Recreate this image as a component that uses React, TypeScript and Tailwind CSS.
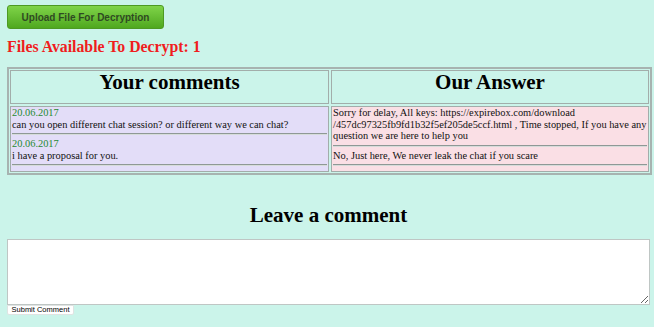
const serif = "font-['Liberation_Serif','Times_New_Roman',serif]";

const comments = [
  { date: "20.06.2017", text: "can you open different chat session? or different way we can chat?" },
  { date: "20.06.2017", text: "i have a proposal for you." },
];

const answers = [
  [
    "Sorry for delay, All keys: https://expirebox.com/download",
    "/457dc97325fb9fd1b32f5ef205de5ccf.html , Time stopped, If you have any",
    "question we are here to help you",
  ],
  ["No, Just here, We never leak the chat if you scare"],
];

function Rule() {
  return <div className="mb-[3px] mt-[3px] h-[2px] border-t border-b border-t-[#8f9896] border-b-[#d6dcda]" />;
}

export default function App() {
  return (
    <div className="h-[330px] w-[658px] bg-white">
      <div className={`h-[327px] w-[654px] bg-[#cbf4ea] pl-[7px] pr-[4px] ${serif}`}>
        {/* Upload */}
        <div className="pt-[5px]">
          <button className="flex h-[24px] w-[157px] items-center justify-center rounded-[3px] border border-[#4d9a22] bg-gradient-to-b from-[#7fd448] to-[#4fa81e] font-['Liberation_Sans',Arial,sans-serif] text-[10px] font-bold text-[#2f4a22]">
            Upload File For Decryption
          </button>
        </div>
        <p className="mt-[9px] text-[15.8px] font-bold leading-[18px] text-[#f01d1d]">Files Available To Decrypt: 1</p>

        {/* Chat table */}
        <div className="mt-[11px] w-[645px] border-[2px] border-[#a7b3b0] p-[1px]">
          <div className="grid grid-cols-[319px_1fr] gap-[2px]">
            <div className="h-[34px] border border-[#a2adaa] text-center text-[21px] font-bold leading-[23px] text-black">
              Your comments
            </div>
            <div className="h-[34px] border border-[#a2adaa] text-center text-[21px] font-bold leading-[23px] text-black">
              Our Answer
            </div>

            <div className="border border-[#a2adaa] bg-[#e3ddf8] px-[1px] pb-[2px] text-[10.4px] leading-[11.5px] text-[#111]">
              {comments.map((c, i) => (
                <div key={i}>
                  <div className="text-[#1f8a32]">{c.date}</div>
                  <div className="whitespace-nowrap">{c.text}</div>
                  <Rule />
                </div>
              ))}
            </div>
            <div className="border border-[#a2adaa] bg-[#fadfe5] px-[1px] pb-[2px] text-[10.4px] leading-[11.5px] text-[#111]">
              {answers.map((lines, i) => (
                <div key={i}>
                  {lines.map((l) => (
                    <div key={l} className="whitespace-nowrap">{l}</div>
                  ))}
                  <Rule />
                </div>
              ))}
            </div>
          </div>
        </div>

        {/* Leave a comment */}
        <h2 className="mt-[28px] text-center text-[21px] font-bold leading-[24px] text-black">Leave a comment</h2>
        <textarea className="mt-[12px] block h-[66px] w-[643px] border border-[#bfc6c4] bg-white" />
        <button className="block h-[10px] w-[67px] rounded-b-[2px] border border-[#dfe3e2] bg-white font-['Liberation_Sans',Arial,sans-serif] text-[7.5px] leading-[8px] text-black">
          Submit Comment
        </button>
      </div>
    </div>
  );
}
